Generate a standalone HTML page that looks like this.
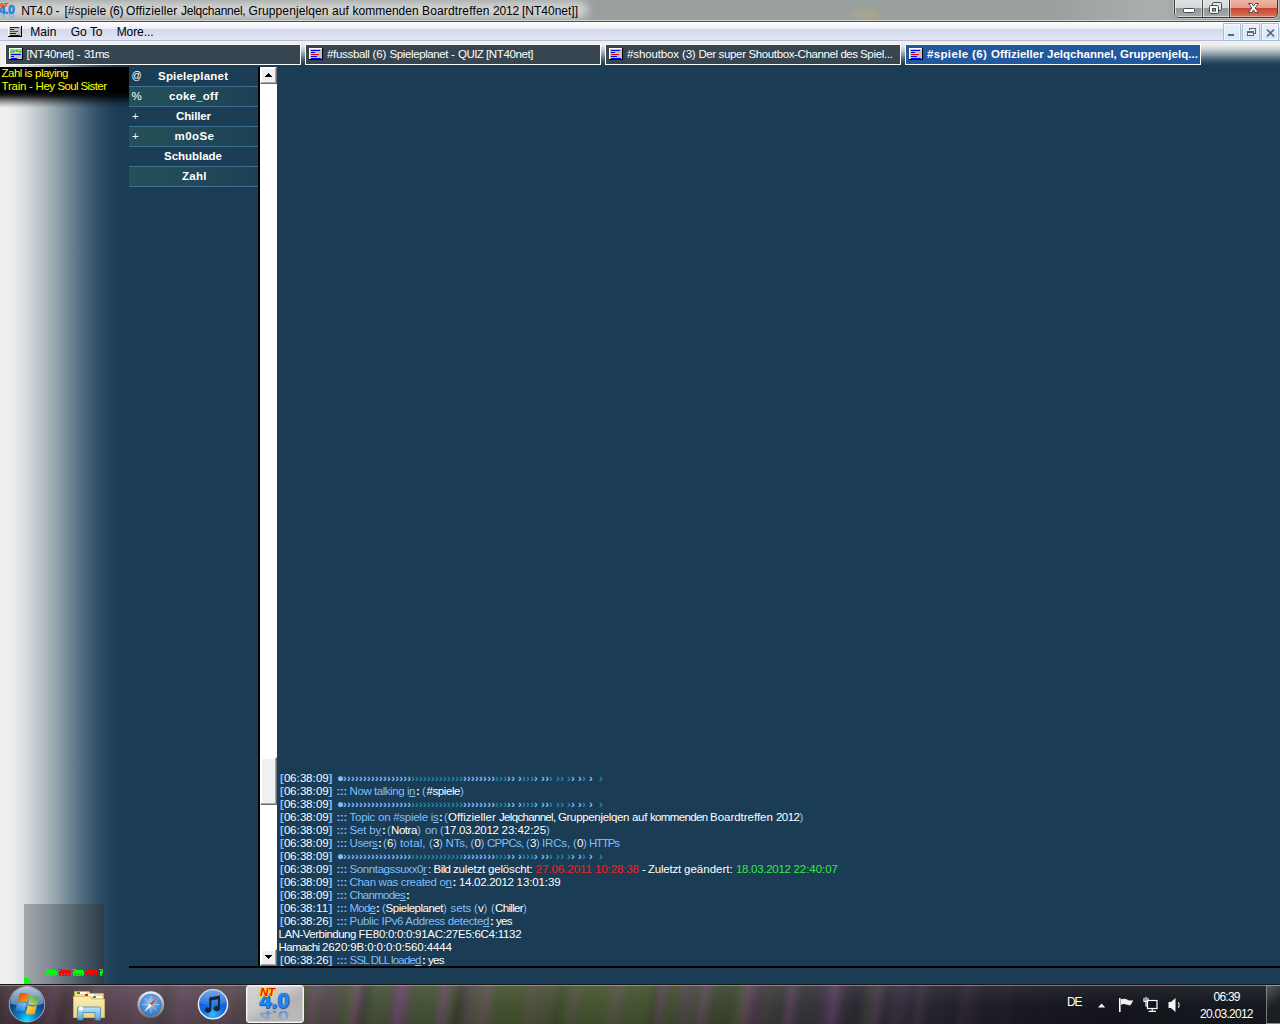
<!DOCTYPE html>
<html lang="de"><head><meta charset="utf-8"><title>NT4.0</title>
<style>
*{box-sizing:border-box;margin:0;padding:0}
html,body{width:1280px;height:1024px;overflow:hidden;background:#1a3c54}
body{position:relative;font-family:"Liberation Sans",sans-serif;font-size:11.5px;color:#fff}
.a{position:absolute}
.t{position:absolute;white-space:pre;line-height:normal;font-family:"Liberation Sans",sans-serif}
#title{left:0;top:0;width:1280px;height:22px;overflow:hidden;background:radial-gradient(ellipse 22px 9px at 866px 15px,rgba(190,176,120,.5),rgba(190,176,120,0)),linear-gradient(90deg,#989f9d 0,#989f9d 1040px,#a3aaa9 1120px,#aab0b0 1165px,#9aa09f 1180px,#989f9d 1280px)}
#title .hl{left:0;top:20px;width:1280px;height:1px;background:#d4d8d8}
#title .dk{left:0;top:21px;width:1280px;height:1px;background:#4a4e4e}
#glow{left:-14px;top:1px;width:602px;height:18px;background:linear-gradient(#cdcdcd,#d9d9d9 40%,#d6d6d6 70%,#c6c6c6);border-radius:9px;filter:blur(4px);opacity:.95}
#menu{left:0;top:22px;width:1280px;height:19px;background:linear-gradient(#fff 0,#f4f5fc 4px,#e8ebf7 7px,#d2d7ec 7px,#e2e6f6 18px,#b8bcd4 18px)}
#strip{left:0;top:41px;width:1280px;height:26px;background:linear-gradient(rgba(240,240,240,1) 0,rgba(240,240,240,1) 3.5px,rgba(240,240,240,.81) 8.5px,rgba(240,240,240,.52) 13.5px,rgba(240,240,240,.25) 17.5px,rgba(240,240,240,.075) 21.5px,rgba(240,240,240,0) 24.5px)}
.tab{top:44px;height:21px;border:1px solid #fff;background:#36454f}
.tab.act{background:#22589c}
.ico{position:absolute;left:3px;top:3px;width:14px;height:12px}
#left{left:0;top:41px;width:129px;height:943px;background:linear-gradient(90deg,#f0f0f0 0,#ebeded 12.5px,#d9dddf 25px,#c0c8cc 37.5px,#a3b0b8 50px,#8496a3 62.5px,#627a8b 75px,#456176 87.5px,#2e4d64 100px,#1e4058 112.5px,#1a3c54 119px)}
#np{left:0;top:67px;width:129px;height:46px;background:linear-gradient(#000 0,#000 25px,rgba(0,0,0,.85) 29px,rgba(0,0,0,.5) 33px,rgba(0,0,0,.2) 37px,rgba(0,0,0,0) 41px)}
#nick{left:129px;top:67px;width:129px}
.row{position:relative;height:20px;border-bottom:1px solid #3f6f93;background:#1b3e56}
.row.alt{background:linear-gradient(100deg,#245058 0,#224a57 50%,#1c4056 100%)}
#vline{left:258px;top:67px;width:2px;height:901px;background:#000}
#sb{left:260px;top:67px;width:17px;height:899px;background:#fff}
.btn3{position:absolute;left:0;width:17px;background:#f0f0f0;border:1px solid;border-color:#fff #6d6d6d #6d6d6d #fff;box-shadow:inset -1px -1px 0 #a6a6a6,inset 1px 1px 0 #fff}
#hline{left:129px;top:966px;width:1151px;height:2px;background:#000}
#graybox{left:24px;top:904px;width:80px;height:80px;background:linear-gradient(90deg,#a4a8ab 0,#8a9298 25%,#66747e 50%,#465662 75%,#2d3e4b 100%)}
#task{left:0;top:984px;width:1280px;height:40px;background:#2a2830;overflow:hidden}

svg{position:absolute;overflow:visible}
.px{shape-rendering:crispEdges}
#capbtn{left:1174px;top:0;width:104px;height:18px;border:1px solid #3a3c3c;border-top:none;border-radius:0 0 5px 5px;overflow:hidden;background:#888;box-shadow:0 0 0 1px rgba(255,255,255,.35)}
#capbtn div{position:absolute;top:0;height:17px}
.cb{background:linear-gradient(#dfe3e3 0,#d3d8d7 8px,#929997 8px,#a4aaa8 17px);box-shadow:inset 1px 0 0 rgba(255,255,255,.6),inset -1px 0 0 rgba(255,255,255,.4),inset 0 -1px 0 rgba(255,255,255,.5)}
.cbx{background:linear-gradient(#eeb5a6 0,#e29c8a 8px,#c6432a 8px,#d9745a 17px);box-shadow:inset 1px 0 0 rgba(255,255,255,.5),inset -1px 0 0 rgba(255,255,255,.4),inset 0 -1px 0 rgba(255,255,255,.4)}
.mdi{top:23px;width:18px;height:18px;border:1px solid #a9bfd8;background:linear-gradient(#e6f0fb,#d8e7f6);box-shadow:inset 0 0 0 1px rgba(255,255,255,.6)}
#tbtop1{left:0;top:0;width:1280px;height:1px;background:#16161a}
#tbtop2{left:0;top:1px;width:1280px;height:1px;background:rgba(200,200,210,.55)}
#tbbase{left:0;top:0;width:1280px;height:40px;background:linear-gradient(90deg,#3d3236 0,#4b3b40 60px,#5b4a54 130px,#594b52 200px,#54474d 246px,#48513a 304px,#46523a 400px,#45532f 520px,#46562f 620px,#3e4a30 700px,#3a3f36 760px,#34333a 820px,#2c2a33 900px,#1c1c25 1000px,#15161e 1100px,#161a20 1280px)}
#tbstreak{left:-40px;top:-4px;width:1160px;height:48px;background:
 repeating-linear-gradient(98deg,rgba(116,72,118,0) 0,rgba(116,72,118,.62) 8px,rgba(116,72,118,0) 19px,rgba(116,72,118,0) 43px),
 repeating-linear-gradient(96deg,rgba(100,62,104,0) 0,rgba(100,62,104,.5) 14px,rgba(100,62,104,0) 31px,rgba(100,62,104,0) 71px),
 repeating-linear-gradient(101deg,rgba(30,24,36,0) 0,rgba(30,24,36,.38) 10px,rgba(30,24,36,0) 22px,rgba(30,24,36,0) 97px),
 repeating-linear-gradient(100deg,rgba(104,124,48,0) 0,rgba(104,124,48,.3) 11px,rgba(104,124,48,0) 24px,rgba(104,124,48,0) 127px);
 -webkit-mask-image:linear-gradient(90deg,rgba(0,0,0,.4) 0,rgba(0,0,0,.5) 300px,#000 370px,#000 500px,rgba(0,0,0,.45) 560px,rgba(0,0,0,.45) 660px,rgba(0,0,0,.9) 720px,rgba(0,0,0,.7) 880px,rgba(0,0,0,.3) 980px,transparent 1080px);mask-image:linear-gradient(90deg,rgba(0,0,0,.4) 0,rgba(0,0,0,.5) 300px,#000 370px,#000 500px,rgba(0,0,0,.45) 560px,rgba(0,0,0,.45) 660px,rgba(0,0,0,.9) 720px,rgba(0,0,0,.7) 880px,rgba(0,0,0,.3) 980px,transparent 1080px);filter:blur(1.5px)}
#tbsheen{left:0;top:2px;width:1280px;height:38px;background:linear-gradient(rgba(255,255,255,.07),rgba(255,255,255,0) 50%,rgba(0,0,0,.12))}
#ntbtn{left:246px;top:1px;width:58px;height:38px;border:1px solid #f4f4f4;border-radius:3px;background:linear-gradient(150deg,#d4d4d4 0,#cac9c9 40%,#b4b2b2 58%,#bdbbbb 100%);box-shadow:inset 0 0 0 1px rgba(255,255,255,.35)}
#showdesk{left:1266px;top:1px;width:14px;height:39px;border:1px solid rgba(190,200,200,.55);border-right:none;background:linear-gradient(135deg,rgba(140,150,150,.45),rgba(40,50,50,.35) 50%,rgba(30,40,40,.3))}
</style></head><body>

<!-- ===== window title bar ===== -->
<div id="title" class="a">
  <div id="glow" class="a"></div>
  <div class="a hl"></div><div class="a dk"></div>
</div>

<div id="capbtn" class="a">
  <div class="cb" style="left:0;width:27px"></div>
  <div style="left:27px;width:1px;background:#4a4c4c"></div>
  <div class="cb" style="left:28px;width:26px"></div>
  <div style="left:54px;width:1px;background:#5a2a20"></div>
  <div class="cbx" style="left:55px;width:48px"></div>
</div>
<svg class="a" style="left:1174px;top:0" width="106" height="20" viewBox="1174 0 106 20">
  <rect x="1183.5" y="8.5" width="11" height="4" rx="1" fill="#fff" stroke="#454a5a" stroke-width="1"/>
  <rect x="1212.5" y="2.5" width="9" height="8" rx="1.2" fill="#e8e8e8" stroke="#454a5a" stroke-width="1"/>
  <rect x="1209.5" y="5.5" width="9" height="8" rx="1.2" fill="#f6f6f6" stroke="#454a5a" stroke-width="1"/>
  <rect x="1212.5" y="8.5" width="3" height="2.5" fill="#a9afad" stroke="#454a5a" stroke-width="1"/>
  <path d="M1248.5 3.5h3.2l1.8 2.6 1.8-2.6h3.2l-3.3 4.5 3.3 4.5h-3.2l-1.8-2.6-1.8 2.6h-3.2l3.3-4.5z" fill="#fff" stroke="#4a4a5a" stroke-width="1" stroke-linejoin="round"/>
</svg>
<div class="t" style="left:-1px;top:2.600px;font:bold 12px 'Liberation Sans',sans-serif;color:#1888f0;letter-spacing:-.4px;text-shadow:0 0 1px #0a50a8">4.0</div>
<div class="t" style="left:-1px;top:7.500px;font:bold 12px 'Liberation Sans',sans-serif;color:#3aa0f0;letter-spacing:-.4px;transform:scaleY(-.5);opacity:.45">4.0</div>
<div class="t" style="left:0;top:1.500px;font:italic bold 6px 'Liberation Sans',sans-serif;color:#f42a10;text-shadow:0 0 1px #ffb020">NT</div>
<span class="t" style="left:21.2px;top:4.14px;font-size:12px;font-weight:normal;letter-spacing:-0.286px;color:#000;">NT4.0 </span>
<span class="t" style="left:55.5px;top:4.14px;font-size:12px;font-weight:normal;letter-spacing:0.828px;color:#000;">- </span>
<span class="t" style="left:64.5px;top:4.14px;font-size:12px;font-weight:normal;letter-spacing:0.033px;color:#000;">[#spiele </span>
<span class="t" style="left:109.5px;top:4.14px;font-size:12px;font-weight:normal;letter-spacing:-0.375px;color:#000;">(6) </span>
<span class="t" style="left:126.0px;top:4.14px;font-size:12px;font-weight:normal;letter-spacing:0.155px;color:#000;">Offizieller </span>
<span class="t" style="left:181.0px;top:4.14px;font-size:12px;font-weight:normal;letter-spacing:-0.248px;color:#000;">Jelqchannel, </span>
<span class="t" style="left:248.5px;top:4.14px;font-size:12px;font-weight:normal;letter-spacing:0.103px;color:#000;">Gruppenjelqen </span>
<span class="t" style="left:332.0px;top:4.14px;font-size:12px;font-weight:normal;letter-spacing:0.121px;color:#000;">auf </span>
<span class="t" style="left:352.5px;top:4.14px;font-size:12px;font-weight:normal;letter-spacing:0.013px;color:#000;">kommenden </span>
<span class="t" style="left:422.0px;top:4.14px;font-size:12px;font-weight:normal;letter-spacing:0.141px;color:#000;">Boardtreffen </span>
<span class="t" style="left:493.0px;top:4.14px;font-size:12px;font-weight:normal;letter-spacing:-0.206px;color:#000;">2012 </span>
<span class="t" style="left:522.0px;top:4.14px;font-size:12px;font-weight:normal;letter-spacing:-0.003px;color:#000;">[NT40net]]</span>

<!-- ===== menu bar ===== -->
<div id="menu" class="a"></div>
<svg class="a px" style="left:8px;top:26px" width="14" height="11" viewBox="0 0 14 11">
<rect x="0" y="0" width="14" height="11" fill="#000"/><rect x="0" y="0" width="13" height="10" fill="#fff"/><rect x="1" y="1" width="12" height="9" fill="#c0c0c0"/>
<rect x="2" y="1" width="9" height="1" fill="#0000ff"/><rect x="2" y="3" width="4" height="1" fill="#0000ff"/><rect x="2" y="5" width="8" height="1" fill="#ff0000"/><rect x="2" y="7" width="6" height="1" fill="#0000ff"/><rect x="2" y="9" width="10" height="1" fill="#0000ff"/></svg>
<div class="a mdi" style="left:1223px"></div><div class="a mdi" style="left:1242px"></div><div class="a mdi" style="left:1261px"></div>
<svg class="a px" style="left:1223px;top:23px" width="57" height="18" viewBox="1223 23 57 18">
  <rect x="1228" y="34" width="6" height="2" fill="#5d6675"/>
  <path d="M1249.5 30v-1.5h6v5h-1.5" fill="none" stroke="#5d6675" stroke-width="1"/><rect x="1249" y="28" width="7" height="1" fill="#5d6675"/>
  <rect x="1247.5" y="31.500" width="6" height="4" fill="none" stroke="#5d6675" stroke-width="1"/><rect x="1247" y="31" width="7" height="2" fill="#5d6675"/>
</svg>
<svg class="a" style="left:1261px;top:23px" width="19" height="18" viewBox="1261 23 19 18">
  <path d="M1267 29.500l7 7M1274 29.500l-7 7" stroke="#5d6675" stroke-width="1.700" fill="none"/>
</svg>
<span class="t" style="left:30.2px;top:25.14px;font-size:12px;font-weight:normal;letter-spacing:0.095px;color:#000;">Main</span>
<span class="t" style="left:70.8px;top:25.14px;font-size:12px;font-weight:normal;letter-spacing:-0.048px;color:#000;">Go </span>
<span class="t" style="left:90.0px;top:25.14px;font-size:12px;font-weight:normal;letter-spacing:-0.188px;color:#000;">To</span>
<span class="t" style="left:116.7px;top:25.14px;font-size:12px;font-weight:normal;letter-spacing:-0.091px;color:#000;">More...</span>

<!-- ===== tab strip ===== -->
<div id="left" class="a"></div>
<div id="strip" class="a"></div>
<div class="a tab" style="left:5px;width:296px"></div>
<div class="a tab" style="left:305px;width:296px"></div>
<div class="a tab" style="left:605px;width:296px"></div>
<div class="a tab act" style="left:905px;width:296px"></div>
<svg class="a px" style="left:9px;top:48px" width="14" height="12" viewBox="0 0 14 12">
<rect width="14" height="12" fill="#000"/><rect width="13" height="11" fill="#fff"/><rect x="1" y="1" width="12" height="10" fill="#c0c0c0"/>
<path d="M1 3h2v-1h2v1h1v-1h1v-1h1v1h1v1h1v-1h1v1h2v1h-1v1h-1v-1h-2v1h-1v-1h-1v-1h-1v1h-1v1h-1v-1h-1v1h-2z" fill="#00ff00"/>
<rect x="6" y="4" width="3" height="1" fill="#ffff00"/>
<rect x="2" y="6" width="10" height="1" fill="#0000ff"/><rect x="2" y="8" width="3" height="1" fill="#0000ff"/><rect x="2" y="10" width="6" height="1" fill="#0000ff"/></svg><svg class="a px" style="left:309px;top:48px" width="14" height="12" viewBox="0 0 14 12">
<rect x="0" y="0" width="14" height="12" fill="#000"/><rect x="0" y="0" width="13" height="11" fill="#fff"/><rect x="1" y="1" width="12" height="10" fill="#c0c0c0"/>
<rect x="2" y="2" width="9" height="1" fill="#0000ff"/><rect x="2" y="4" width="4" height="1" fill="#0000ff"/><rect x="2" y="6" width="8" height="1" fill="#ff0000"/><rect x="2" y="8" width="6" height="1" fill="#0000ff"/><rect x="2" y="10" width="10" height="1" fill="#0000ff"/></svg><svg class="a px" style="left:609px;top:48px" width="14" height="12" viewBox="0 0 14 12">
<rect x="0" y="0" width="14" height="12" fill="#000"/><rect x="0" y="0" width="13" height="11" fill="#fff"/><rect x="1" y="1" width="12" height="10" fill="#c0c0c0"/>
<rect x="2" y="2" width="9" height="1" fill="#0000ff"/><rect x="2" y="4" width="4" height="1" fill="#0000ff"/><rect x="2" y="6" width="8" height="1" fill="#ff0000"/><rect x="2" y="8" width="6" height="1" fill="#0000ff"/><rect x="2" y="10" width="10" height="1" fill="#0000ff"/></svg><svg class="a px" style="left:909px;top:48px" width="14" height="12" viewBox="0 0 14 12">
<rect x="0" y="0" width="14" height="12" fill="#000"/><rect x="0" y="0" width="13" height="11" fill="#fff"/><rect x="1" y="1" width="12" height="10" fill="#c0c0c0"/>
<rect x="2" y="2" width="9" height="1" fill="#0000ff"/><rect x="2" y="4" width="4" height="1" fill="#0000ff"/><rect x="2" y="6" width="8" height="1" fill="#ff0000"/><rect x="2" y="8" width="6" height="1" fill="#0000ff"/><rect x="2" y="10" width="10" height="1" fill="#0000ff"/></svg>
<span class="t" style="left:26.5px;top:47.59px;font-size:11.5px;font-weight:normal;letter-spacing:-0.370px;color:#ffffff;">[NT40net] </span>
<span class="t" style="left:76.5px;top:47.59px;font-size:11.5px;font-weight:normal;letter-spacing:0.234px;color:#ffffff;">- </span>
<span class="t" style="left:84.0px;top:47.59px;font-size:11.5px;font-weight:normal;letter-spacing:-0.875px;color:#ffffff;">31ms</span>
<span class="t" style="left:327.0px;top:47.59px;font-size:11.5px;font-weight:normal;letter-spacing:-0.309px;color:#ffffff;">#fussball </span>
<span class="t" style="left:372.5px;top:47.59px;font-size:11.5px;font-weight:normal;letter-spacing:-0.062px;color:#ffffff;">(6) </span>
<span class="t" style="left:389.5px;top:47.59px;font-size:11.5px;font-weight:normal;letter-spacing:-0.385px;color:#ffffff;">Spieleplanet </span>
<span class="t" style="left:451.0px;top:47.59px;font-size:11.5px;font-weight:normal;letter-spacing:-0.016px;color:#ffffff;">- </span>
<span class="t" style="left:458.0px;top:47.59px;font-size:11.5px;font-weight:normal;letter-spacing:-0.534px;color:#ffffff;">QUIZ </span>
<span class="t" style="left:486.0px;top:47.59px;font-size:11.5px;font-weight:normal;letter-spacing:-0.375px;color:#ffffff;">[NT40net]</span>
<span class="t" style="left:627.0px;top:47.59px;font-size:11.5px;font-weight:normal;letter-spacing:-0.127px;color:#ffffff;">#shoutbox </span>
<span class="t" style="left:682.0px;top:47.59px;font-size:11.5px;font-weight:normal;letter-spacing:-0.188px;color:#ffffff;">(3) </span>
<span class="t" style="left:698.5px;top:47.59px;font-size:11.5px;font-weight:normal;letter-spacing:-0.434px;color:#ffffff;">Der </span>
<span class="t" style="left:718.5px;top:47.59px;font-size:11.5px;font-weight:normal;letter-spacing:-0.328px;color:#ffffff;">super </span>
<span class="t" style="left:748.5px;top:47.59px;font-size:11.5px;font-weight:normal;letter-spacing:-0.381px;color:#ffffff;">Shoutbox-Channel </span>
<span class="t" style="left:840.5px;top:47.59px;font-size:11.5px;font-weight:normal;letter-spacing:-0.562px;color:#ffffff;">des </span>
<span class="t" style="left:860.0px;top:47.59px;font-size:11.5px;font-weight:normal;letter-spacing:-0.310px;color:#ffffff;">Spiel...</span>
<span class="t" style="left:927.0px;top:47.59px;font-size:11.5px;font-weight:bold;letter-spacing:0.350px;color:#ffffff;">#spiele </span>
<span class="t" style="left:972.0px;top:47.59px;font-size:11.5px;font-weight:bold;letter-spacing:0.438px;color:#ffffff;">(6) </span>
<span class="t" style="left:991.0px;top:47.59px;font-size:11.5px;font-weight:bold;letter-spacing:0.033px;color:#ffffff;">Offizieller </span>
<span class="t" style="left:1047.0px;top:47.59px;font-size:11.5px;font-weight:bold;letter-spacing:0.011px;color:#ffffff;">Jelqchannel, </span>
<span class="t" style="left:1120.0px;top:47.59px;font-size:11.5px;font-weight:bold;letter-spacing:0.053px;color:#ffffff;">Gruppenjelq...</span>

<!-- ===== left gradient panel ===== -->
<div id="np" class="a"></div>
<div id="graybox" class="a"></div>
<svg class="a px" style="left:0;top:960px" width="129" height="24" viewBox="0 960 129 24"><rect x="45" y="969" width="4" height="1" fill="#00ff00"/><rect x="48" y="970" width="8" height="1" fill="#00ff00"/><rect x="46" y="971" width="11" height="2" fill="#00ff00"/><rect x="46" y="973" width="2" height="2" fill="#00ff00"/><rect x="49" y="973" width="2" height="2" fill="#00ff00"/><rect x="52" y="973" width="2" height="2" fill="#00ff00"/><rect x="55" y="973" width="2" height="2" fill="#00ff00"/><rect x="46" y="975" width="10" height="1" fill="#00ff00" opacity=".7"/><rect x="58" y="969" width="4" height="1" fill="#ff0000"/><rect x="61" y="970" width="9" height="1" fill="#ff0000"/><rect x="59" y="971" width="12" height="2" fill="#ff0000"/><rect x="59" y="973" width="2" height="2" fill="#ff0000"/><rect x="62" y="973" width="2" height="2" fill="#ff0000"/><rect x="65" y="973" width="2" height="2" fill="#ff0000"/><rect x="68" y="973" width="2" height="2" fill="#ff0000"/><rect x="59" y="975" width="11" height="1" fill="#ff0000" opacity=".7"/><rect x="72" y="969" width="4" height="1" fill="#00ff00"/><rect x="75" y="970" width="8" height="1" fill="#00ff00"/><rect x="73" y="971" width="11" height="2" fill="#00ff00"/><rect x="73" y="973" width="2" height="2" fill="#00ff00"/><rect x="76" y="973" width="2" height="2" fill="#00ff00"/><rect x="79" y="973" width="2" height="2" fill="#00ff00"/><rect x="82" y="973" width="2" height="2" fill="#00ff00"/><rect x="73" y="975" width="10" height="1" fill="#00ff00" opacity=".7"/><rect x="85" y="969" width="4" height="1" fill="#ff0000"/><rect x="88" y="970" width="9" height="1" fill="#ff0000"/><rect x="86" y="971" width="12" height="2" fill="#ff0000"/><rect x="86" y="973" width="2" height="2" fill="#ff0000"/><rect x="89" y="973" width="2" height="2" fill="#ff0000"/><rect x="92" y="973" width="2" height="2" fill="#ff0000"/><rect x="95" y="973" width="2" height="2" fill="#ff0000"/><rect x="86" y="975" width="11" height="1" fill="#ff0000" opacity=".7"/><rect x="99" y="969" width="4" height="1" fill="#00ff00"/><rect x="102" y="970" width="1" height="1" fill="#00ff00"/><rect x="100" y="971" width="3" height="2" fill="#00ff00"/><rect x="100" y="973" width="2" height="2" fill="#00ff00"/><rect x="100" y="975" width="2" height="1" fill="#00ff00" opacity=".7"/><rect x="24" y="978" width="6" height="1" fill="#00ff00"/><rect x="24" y="979" width="5" height="2" fill="#00ff00"/><rect x="25" y="981" width="2" height="3" fill="#00ff00"/><rect x="28" y="981" width="2" height="3" fill="#00ff00"/><rect x="31" y="980" width="1" height="4" fill="#00ff00"/><rect x="24" y="982" width="1" height="2" fill="#00ff00"/></svg>
<span class="t" style="left:1.5px;top:66.59px;font-size:11.5px;font-weight:normal;letter-spacing:-0.516px;color:#ffff00;">Zahl </span>
<span class="t" style="left:24.5px;top:66.59px;font-size:11.5px;font-weight:normal;letter-spacing:-0.333px;color:#ffff00;">is </span>
<span class="t" style="left:35.0px;top:66.59px;font-size:11.5px;font-weight:normal;letter-spacing:-0.492px;color:#ffff00;">playing</span>
<span class="t" style="left:1.6px;top:79.59px;font-size:11.5px;font-weight:normal;letter-spacing:-0.264px;color:#ffff00;">Train </span>
<span class="t" style="left:29.0px;top:79.59px;font-size:11.5px;font-weight:normal;letter-spacing:-0.266px;color:#ffff00;">- </span>
<span class="t" style="left:35.5px;top:79.59px;font-size:11.5px;font-weight:normal;letter-spacing:-0.414px;color:#ffff00;">Hey </span>
<span class="t" style="left:57.5px;top:79.59px;font-size:11.5px;font-weight:normal;letter-spacing:-0.644px;color:#ffff00;">Soul </span>
<span class="t" style="left:80.5px;top:79.59px;font-size:11.5px;font-weight:normal;letter-spacing:-0.581px;color:#ffff00;">Sister</span>

<!-- ===== nick list ===== -->
<div id="nick" class="a">
  <div class="row"></div><div class="row alt"></div><div class="row"></div><div class="row alt"></div><div class="row"></div><div class="row alt"></div>
</div>
<span class="t" style="left:131.5px;top:70.45px;font-size:10px;font-weight:normal;letter-spacing:0.000px;color:#ffffff;">@</span>
<span class="t" style="left:158.0px;top:69.59px;font-size:11.5px;font-weight:bold;letter-spacing:0.205px;color:#ffffff;">Spieleplanet</span>
<span class="t" style="left:131.5px;top:89.59px;font-size:11.5px;font-weight:normal;letter-spacing:0.000px;color:#ffffff;">%</span>
<span class="t" style="left:169.0px;top:89.59px;font-size:11.5px;font-weight:bold;letter-spacing:0.243px;color:#ffffff;">coke_off</span>
<span class="t" style="left:132.0px;top:109.59px;font-size:11.5px;font-weight:normal;letter-spacing:0.000px;color:#ffffff;">+</span>
<span class="t" style="left:176.0px;top:109.59px;font-size:11.5px;font-weight:bold;letter-spacing:-0.133px;color:#ffffff;">Chiller</span>
<span class="t" style="left:132.0px;top:129.59px;font-size:11.5px;font-weight:normal;letter-spacing:0.000px;color:#ffffff;">+</span>
<span class="t" style="left:174.5px;top:129.59px;font-size:11.5px;font-weight:bold;letter-spacing:0.445px;color:#ffffff;">m0oSe</span>
<span class="t" style="left:164.0px;top:149.59px;font-size:11.5px;font-weight:bold;letter-spacing:-0.020px;color:#ffffff;">Schublade</span>
<span class="t" style="left:182.0px;top:169.59px;font-size:11.5px;font-weight:bold;letter-spacing:0.286px;color:#ffffff;">Zahl</span>
<div id="vline" class="a"></div>
<div id="sb" class="a">
  <div class="btn3" style="top:0;height:17px"></div>
  <div class="btn3" style="top:690px;height:48px"></div>
  <div class="btn3" style="top:882px;height:17px"></div>
</div>
<svg class="a px" style="left:260px;top:67px" width="17" height="899" viewBox="0 0 17 899">
<path d="M8 6h1v1h1v1h1v1h1v1h-7v-1h1v-1h1v-1h1z" fill="#000"/>
<path d="M5 888h7v1h-1v1h-1v1h-1v1h-1v-1h-1v-1h-1v-1h-1z" fill="#000"/></svg>
<div id="hline" class="a"></div>

<!-- ===== chat ===== -->
<span class="t" style="left:280.0px;top:771.59px;font-size:11.5px;font-weight:normal;letter-spacing:0.000px;color:#7fbfff;font-weight:bold;">[</span>
<span class="t" style="left:284.0px;top:771.59px;font-size:11.5px;font-weight:normal;letter-spacing:-0.298px;color:#ffffff;">06</span>
<span class="t" style="left:296.2px;top:771.59px;font-size:11.5px;font-weight:normal;letter-spacing:0.000px;color:#7fbfff;font-weight:bold;">:</span>
<span class="t" style="left:300.0px;top:771.59px;font-size:11.5px;font-weight:normal;letter-spacing:-0.298px;color:#ffffff;">38</span>
<span class="t" style="left:312.2px;top:771.59px;font-size:11.5px;font-weight:normal;letter-spacing:0.000px;color:#7fbfff;font-weight:bold;">:</span>
<span class="t" style="left:316.0px;top:771.59px;font-size:11.5px;font-weight:normal;letter-spacing:-0.198px;color:#ffffff;">09</span>
<span class="t" style="left:328.4px;top:771.59px;font-size:11.5px;font-weight:normal;letter-spacing:0.000px;color:#7fbfff;font-weight:bold;">]</span>
<span class="t" style="left:337.0px;top:771.59px;font-size:11.5px;font-weight:normal;letter-spacing:0.000px;color:#7fbfff;">●</span>
<span class="t" style="left:343.0px;top:771.59px;font-size:11.5px;font-weight:normal;letter-spacing:0.181px;color:#7fbfff;font-weight:bold;">›››››››››››››››››</span>
<span class="t" style="left:411.0px;top:771.59px;font-size:11.5px;font-weight:normal;letter-spacing:0.184px;color:#1d8fb0;font-weight:bold;">›››››››››››››</span>
<span class="t" style="left:463.0px;top:771.59px;font-size:11.5px;font-weight:normal;letter-spacing:0.194px;color:#7fbfff;font-weight:bold;">››››››››</span>
<span class="t" style="left:495.0px;top:771.59px;font-size:11.5px;font-weight:normal;letter-spacing:0.250px;color:#1d8fb0;font-weight:bold;">›››</span>
<span class="t" style="left:507.0px;top:771.59px;font-size:11.5px;font-weight:normal;letter-spacing:0.328px;color:#7fbfff;font-weight:bold;">››</span>
<span class="t" style="left:518.0px;top:771.59px;font-size:11.5px;font-weight:normal;letter-spacing:0.000px;color:#7fbfff;font-weight:bold;">›</span>
<span class="t" style="left:522.0px;top:771.59px;font-size:11.5px;font-weight:normal;letter-spacing:0.250px;color:#1d8fb0;font-weight:bold;">›››</span>
<span class="t" style="left:534.0px;top:771.59px;font-size:11.5px;font-weight:normal;letter-spacing:0.000px;color:#7fbfff;font-weight:bold;">›</span>
<span class="t" style="left:541.0px;top:771.59px;font-size:11.5px;font-weight:normal;letter-spacing:0.328px;color:#7fbfff;font-weight:bold;">››</span>
<span class="t" style="left:549.0px;top:771.59px;font-size:11.5px;font-weight:normal;letter-spacing:0.000px;color:#1d8fb0;font-weight:bold;">›</span>
<span class="t" style="left:556.0px;top:771.59px;font-size:11.5px;font-weight:normal;letter-spacing:0.328px;color:#1d8fb0;font-weight:bold;">››</span>
<span class="t" style="left:567.0px;top:771.59px;font-size:11.5px;font-weight:normal;letter-spacing:0.000px;color:#1d8fb0;font-weight:bold;">›</span>
<span class="t" style="left:571.0px;top:771.59px;font-size:11.5px;font-weight:normal;letter-spacing:0.000px;color:#7fbfff;font-weight:bold;">›</span>
<span class="t" style="left:578.0px;top:771.59px;font-size:11.5px;font-weight:normal;letter-spacing:0.000px;color:#7fbfff;font-weight:bold;">›</span>
<span class="t" style="left:582.0px;top:771.59px;font-size:11.5px;font-weight:normal;letter-spacing:0.000px;color:#1d8fb0;font-weight:bold;">›</span>
<span class="t" style="left:589.0px;top:771.59px;font-size:11.5px;font-weight:normal;letter-spacing:0.000px;color:#7fbfff;font-weight:bold;">›</span>
<span class="t" style="left:599.0px;top:771.59px;font-size:11.5px;font-weight:normal;letter-spacing:0.000px;color:#1d8fb0;font-weight:bold;">›</span>
<span class="t" style="left:280.0px;top:784.59px;font-size:11.5px;font-weight:normal;letter-spacing:0.000px;color:#7fbfff;font-weight:bold;">[</span>
<span class="t" style="left:284.0px;top:784.59px;font-size:11.5px;font-weight:normal;letter-spacing:-0.298px;color:#ffffff;">06</span>
<span class="t" style="left:296.2px;top:784.59px;font-size:11.5px;font-weight:normal;letter-spacing:0.000px;color:#7fbfff;font-weight:bold;">:</span>
<span class="t" style="left:300.0px;top:784.59px;font-size:11.5px;font-weight:normal;letter-spacing:-0.298px;color:#ffffff;">38</span>
<span class="t" style="left:312.2px;top:784.59px;font-size:11.5px;font-weight:normal;letter-spacing:0.000px;color:#7fbfff;font-weight:bold;">:</span>
<span class="t" style="left:316.0px;top:784.59px;font-size:11.5px;font-weight:normal;letter-spacing:-0.198px;color:#ffffff;">09</span>
<span class="t" style="left:328.4px;top:784.59px;font-size:11.5px;font-weight:normal;letter-spacing:0.000px;color:#7fbfff;font-weight:bold;">]</span>
<span class="t" style="left:336.6px;top:784.59px;font-size:11.5px;font-weight:normal;letter-spacing:-0.422px;color:#7fbfff;font-weight:bold;">::: </span>
<span class="t" style="left:349.6px;top:784.59px;font-size:11.5px;font-weight:normal;letter-spacing:-0.446px;color:#7fbfff;">Now talking i</span>
<span class="t" style="left:409.0px;top:784.59px;font-size:11.5px;font-weight:normal;letter-spacing:0.000px;color:#7fbfff;text-decoration:underline;">n</span>
<span class="t" style="left:416.0px;top:784.59px;font-size:11.5px;font-weight:normal;letter-spacing:0.000px;color:#ffffff;font-weight:bold;">:</span>
<span class="t" style="left:422.0px;top:784.59px;font-size:11.5px;font-weight:normal;letter-spacing:0.000px;color:#7fbfff;">(</span>
<span class="t" style="left:426.5px;top:784.59px;font-size:11.5px;font-weight:normal;letter-spacing:-0.422px;color:#ffffff;">#spiele</span>
<span class="t" style="left:460.0px;top:784.59px;font-size:11.5px;font-weight:normal;letter-spacing:0.000px;color:#7fbfff;">)</span>
<span class="t" style="left:280.0px;top:797.59px;font-size:11.5px;font-weight:normal;letter-spacing:0.000px;color:#7fbfff;font-weight:bold;">[</span>
<span class="t" style="left:284.0px;top:797.59px;font-size:11.5px;font-weight:normal;letter-spacing:-0.298px;color:#ffffff;">06</span>
<span class="t" style="left:296.2px;top:797.59px;font-size:11.5px;font-weight:normal;letter-spacing:0.000px;color:#7fbfff;font-weight:bold;">:</span>
<span class="t" style="left:300.0px;top:797.59px;font-size:11.5px;font-weight:normal;letter-spacing:-0.298px;color:#ffffff;">38</span>
<span class="t" style="left:312.2px;top:797.59px;font-size:11.5px;font-weight:normal;letter-spacing:0.000px;color:#7fbfff;font-weight:bold;">:</span>
<span class="t" style="left:316.0px;top:797.59px;font-size:11.5px;font-weight:normal;letter-spacing:-0.198px;color:#ffffff;">09</span>
<span class="t" style="left:328.4px;top:797.59px;font-size:11.5px;font-weight:normal;letter-spacing:0.000px;color:#7fbfff;font-weight:bold;">]</span>
<span class="t" style="left:337.0px;top:797.59px;font-size:11.5px;font-weight:normal;letter-spacing:0.000px;color:#7fbfff;">●</span>
<span class="t" style="left:343.0px;top:797.59px;font-size:11.5px;font-weight:normal;letter-spacing:0.181px;color:#7fbfff;font-weight:bold;">›››››››››››››››››</span>
<span class="t" style="left:411.0px;top:797.59px;font-size:11.5px;font-weight:normal;letter-spacing:0.184px;color:#1d8fb0;font-weight:bold;">›››››››››››››</span>
<span class="t" style="left:463.0px;top:797.59px;font-size:11.5px;font-weight:normal;letter-spacing:0.194px;color:#7fbfff;font-weight:bold;">››››››››</span>
<span class="t" style="left:495.0px;top:797.59px;font-size:11.5px;font-weight:normal;letter-spacing:0.250px;color:#1d8fb0;font-weight:bold;">›››</span>
<span class="t" style="left:507.0px;top:797.59px;font-size:11.5px;font-weight:normal;letter-spacing:0.328px;color:#7fbfff;font-weight:bold;">››</span>
<span class="t" style="left:518.0px;top:797.59px;font-size:11.5px;font-weight:normal;letter-spacing:0.000px;color:#7fbfff;font-weight:bold;">›</span>
<span class="t" style="left:522.0px;top:797.59px;font-size:11.5px;font-weight:normal;letter-spacing:0.250px;color:#1d8fb0;font-weight:bold;">›››</span>
<span class="t" style="left:534.0px;top:797.59px;font-size:11.5px;font-weight:normal;letter-spacing:0.000px;color:#7fbfff;font-weight:bold;">›</span>
<span class="t" style="left:541.0px;top:797.59px;font-size:11.5px;font-weight:normal;letter-spacing:0.328px;color:#7fbfff;font-weight:bold;">››</span>
<span class="t" style="left:549.0px;top:797.59px;font-size:11.5px;font-weight:normal;letter-spacing:0.000px;color:#1d8fb0;font-weight:bold;">›</span>
<span class="t" style="left:556.0px;top:797.59px;font-size:11.5px;font-weight:normal;letter-spacing:0.328px;color:#1d8fb0;font-weight:bold;">››</span>
<span class="t" style="left:567.0px;top:797.59px;font-size:11.5px;font-weight:normal;letter-spacing:0.000px;color:#1d8fb0;font-weight:bold;">›</span>
<span class="t" style="left:571.0px;top:797.59px;font-size:11.5px;font-weight:normal;letter-spacing:0.000px;color:#7fbfff;font-weight:bold;">›</span>
<span class="t" style="left:578.0px;top:797.59px;font-size:11.5px;font-weight:normal;letter-spacing:0.000px;color:#7fbfff;font-weight:bold;">›</span>
<span class="t" style="left:582.0px;top:797.59px;font-size:11.5px;font-weight:normal;letter-spacing:0.000px;color:#1d8fb0;font-weight:bold;">›</span>
<span class="t" style="left:589.0px;top:797.59px;font-size:11.5px;font-weight:normal;letter-spacing:0.000px;color:#7fbfff;font-weight:bold;">›</span>
<span class="t" style="left:599.0px;top:797.59px;font-size:11.5px;font-weight:normal;letter-spacing:0.000px;color:#1d8fb0;font-weight:bold;">›</span>
<span class="t" style="left:280.0px;top:810.59px;font-size:11.5px;font-weight:normal;letter-spacing:0.000px;color:#7fbfff;font-weight:bold;">[</span>
<span class="t" style="left:284.0px;top:810.59px;font-size:11.5px;font-weight:normal;letter-spacing:-0.298px;color:#ffffff;">06</span>
<span class="t" style="left:296.2px;top:810.59px;font-size:11.5px;font-weight:normal;letter-spacing:0.000px;color:#7fbfff;font-weight:bold;">:</span>
<span class="t" style="left:300.0px;top:810.59px;font-size:11.5px;font-weight:normal;letter-spacing:-0.298px;color:#ffffff;">38</span>
<span class="t" style="left:312.2px;top:810.59px;font-size:11.5px;font-weight:normal;letter-spacing:0.000px;color:#7fbfff;font-weight:bold;">:</span>
<span class="t" style="left:316.0px;top:810.59px;font-size:11.5px;font-weight:normal;letter-spacing:-0.198px;color:#ffffff;">09</span>
<span class="t" style="left:328.4px;top:810.59px;font-size:11.5px;font-weight:normal;letter-spacing:0.000px;color:#7fbfff;font-weight:bold;">]</span>
<span class="t" style="left:336.6px;top:810.59px;font-size:11.5px;font-weight:normal;letter-spacing:-0.422px;color:#7fbfff;font-weight:bold;">::: </span>
<span class="t" style="left:349.6px;top:810.59px;font-size:11.5px;font-weight:normal;letter-spacing:-0.269px;color:#7fbfff;">Topic on #spiele i</span>
<span class="t" style="left:433.0px;top:810.59px;font-size:11.5px;font-weight:normal;letter-spacing:0.000px;color:#7fbfff;text-decoration:underline;">s</span>
<span class="t" style="left:439.0px;top:810.59px;font-size:11.5px;font-weight:normal;letter-spacing:0.000px;color:#ffffff;font-weight:bold;">:</span>
<span class="t" style="left:444.0px;top:810.59px;font-size:11.5px;font-weight:normal;letter-spacing:0.000px;color:#7fbfff;">(</span>
<span class="t" style="left:448.0px;top:810.59px;font-size:11.5px;font-weight:normal;letter-spacing:0.007px;color:#ffffff;">Offizieller </span>
<span class="t" style="left:499.0px;top:810.59px;font-size:11.5px;font-weight:normal;letter-spacing:-0.675px;color:#ffffff;">Jelqchannel, </span>
<span class="t" style="left:558.0px;top:810.59px;font-size:11.5px;font-weight:normal;letter-spacing:-0.333px;color:#ffffff;">Gruppenjelqen </span>
<span class="t" style="left:632.0px;top:810.59px;font-size:11.5px;font-weight:normal;letter-spacing:-0.297px;color:#ffffff;">auf </span>
<span class="t" style="left:650.0px;top:810.59px;font-size:11.5px;font-weight:normal;letter-spacing:-0.648px;color:#ffffff;">kommenden </span>
<span class="t" style="left:710.0px;top:810.59px;font-size:11.5px;font-weight:normal;letter-spacing:-0.022px;color:#ffffff;">Boardtreffen </span>
<span class="t" style="left:776.0px;top:810.59px;font-size:11.5px;font-weight:normal;letter-spacing:-0.523px;color:#ffffff;">2012</span>
<span class="t" style="left:799.5px;top:810.59px;font-size:11.5px;font-weight:normal;letter-spacing:0.000px;color:#7fbfff;">)</span>
<span class="t" style="left:280.0px;top:823.59px;font-size:11.5px;font-weight:normal;letter-spacing:0.000px;color:#7fbfff;font-weight:bold;">[</span>
<span class="t" style="left:284.0px;top:823.59px;font-size:11.5px;font-weight:normal;letter-spacing:-0.298px;color:#ffffff;">06</span>
<span class="t" style="left:296.2px;top:823.59px;font-size:11.5px;font-weight:normal;letter-spacing:0.000px;color:#7fbfff;font-weight:bold;">:</span>
<span class="t" style="left:300.0px;top:823.59px;font-size:11.5px;font-weight:normal;letter-spacing:-0.298px;color:#ffffff;">38</span>
<span class="t" style="left:312.2px;top:823.59px;font-size:11.5px;font-weight:normal;letter-spacing:0.000px;color:#7fbfff;font-weight:bold;">:</span>
<span class="t" style="left:316.0px;top:823.59px;font-size:11.5px;font-weight:normal;letter-spacing:-0.198px;color:#ffffff;">09</span>
<span class="t" style="left:328.4px;top:823.59px;font-size:11.5px;font-weight:normal;letter-spacing:0.000px;color:#7fbfff;font-weight:bold;">]</span>
<span class="t" style="left:336.6px;top:823.59px;font-size:11.5px;font-weight:normal;letter-spacing:-0.422px;color:#7fbfff;font-weight:bold;">::: </span>
<span class="t" style="left:349.6px;top:823.59px;font-size:11.5px;font-weight:normal;letter-spacing:-0.192px;color:#7fbfff;">Set b</span>
<span class="t" style="left:375.5px;top:823.59px;font-size:11.5px;font-weight:normal;letter-spacing:0.000px;color:#7fbfff;text-decoration:underline;">y</span>
<span class="t" style="left:382.0px;top:823.59px;font-size:11.5px;font-weight:normal;letter-spacing:0.000px;color:#ffffff;font-weight:bold;">:</span>
<span class="t" style="left:387.0px;top:823.59px;font-size:11.5px;font-weight:normal;letter-spacing:0.000px;color:#7fbfff;">(</span>
<span class="t" style="left:391.0px;top:823.59px;font-size:11.5px;font-weight:normal;letter-spacing:-0.425px;color:#ffffff;">Notra</span>
<span class="t" style="left:417.0px;top:823.59px;font-size:11.5px;font-weight:normal;letter-spacing:0.000px;color:#7fbfff;">)</span>
<span class="t" style="left:425.0px;top:823.59px;font-size:11.5px;font-weight:normal;letter-spacing:-0.333px;color:#7fbfff;">on </span>
<span class="t" style="left:440.0px;top:823.59px;font-size:11.5px;font-weight:normal;letter-spacing:0.000px;color:#7fbfff;">(</span>
<span class="t" style="left:444.0px;top:823.59px;font-size:11.5px;font-weight:normal;letter-spacing:-0.288px;color:#ffffff;">17.03.2012 </span>
<span class="t" style="left:501.6px;top:823.59px;font-size:11.5px;font-weight:normal;letter-spacing:-0.046px;color:#ffffff;">23:42:25</span>
<span class="t" style="left:546.0px;top:823.59px;font-size:11.5px;font-weight:normal;letter-spacing:0.000px;color:#7fbfff;">)</span>
<span class="t" style="left:280.0px;top:836.59px;font-size:11.5px;font-weight:normal;letter-spacing:0.000px;color:#7fbfff;font-weight:bold;">[</span>
<span class="t" style="left:284.0px;top:836.59px;font-size:11.5px;font-weight:normal;letter-spacing:-0.298px;color:#ffffff;">06</span>
<span class="t" style="left:296.2px;top:836.59px;font-size:11.5px;font-weight:normal;letter-spacing:0.000px;color:#7fbfff;font-weight:bold;">:</span>
<span class="t" style="left:300.0px;top:836.59px;font-size:11.5px;font-weight:normal;letter-spacing:-0.298px;color:#ffffff;">38</span>
<span class="t" style="left:312.2px;top:836.59px;font-size:11.5px;font-weight:normal;letter-spacing:0.000px;color:#7fbfff;font-weight:bold;">:</span>
<span class="t" style="left:316.0px;top:836.59px;font-size:11.5px;font-weight:normal;letter-spacing:-0.198px;color:#ffffff;">09</span>
<span class="t" style="left:328.4px;top:836.59px;font-size:11.5px;font-weight:normal;letter-spacing:0.000px;color:#7fbfff;font-weight:bold;">]</span>
<span class="t" style="left:336.6px;top:836.59px;font-size:11.5px;font-weight:normal;letter-spacing:-0.422px;color:#7fbfff;font-weight:bold;">::: </span>
<span class="t" style="left:349.6px;top:836.59px;font-size:11.5px;font-weight:normal;letter-spacing:-0.470px;color:#7fbfff;">User</span>
<span class="t" style="left:372.0px;top:836.59px;font-size:11.5px;font-weight:normal;letter-spacing:0.000px;color:#7fbfff;text-decoration:underline;">s</span>
<span class="t" style="left:378.0px;top:836.59px;font-size:11.5px;font-weight:normal;letter-spacing:0.000px;color:#ffffff;font-weight:bold;">:</span>
<span class="t" style="left:383.0px;top:836.59px;font-size:11.5px;font-weight:normal;letter-spacing:0.000px;color:#7fbfff;">(</span>
<span class="t" style="left:387.0px;top:836.59px;font-size:11.5px;font-weight:normal;letter-spacing:0.000px;color:#ffffff;">6</span>
<span class="t" style="left:393.0px;top:836.59px;font-size:11.5px;font-weight:normal;letter-spacing:0.000px;color:#7fbfff;">)</span>
<span class="t" style="left:400.0px;top:836.59px;font-size:11.5px;font-weight:normal;letter-spacing:0.123px;color:#7fbfff;">total, </span>
<span class="t" style="left:429.0px;top:836.59px;font-size:11.5px;font-weight:normal;letter-spacing:0.000px;color:#7fbfff;">(</span>
<span class="t" style="left:433.0px;top:836.59px;font-size:11.5px;font-weight:normal;letter-spacing:0.000px;color:#ffffff;">3</span>
<span class="t" style="left:439.0px;top:836.59px;font-size:11.5px;font-weight:normal;letter-spacing:0.000px;color:#7fbfff;">)</span>
<span class="t" style="left:445.6px;top:836.59px;font-size:11.5px;font-weight:normal;letter-spacing:-0.241px;color:#7fbfff;">NTs, </span>
<span class="t" style="left:470.6px;top:836.59px;font-size:11.5px;font-weight:normal;letter-spacing:0.000px;color:#7fbfff;">(</span>
<span class="t" style="left:474.6px;top:836.59px;font-size:11.5px;font-weight:normal;letter-spacing:0.000px;color:#ffffff;">0</span>
<span class="t" style="left:480.6px;top:836.59px;font-size:11.5px;font-weight:normal;letter-spacing:0.000px;color:#7fbfff;">)</span>
<span class="t" style="left:487.0px;top:836.59px;font-size:11.5px;font-weight:normal;letter-spacing:-0.728px;color:#7fbfff;">CPPCs, </span>
<span class="t" style="left:526.0px;top:836.59px;font-size:11.5px;font-weight:normal;letter-spacing:0.000px;color:#7fbfff;">(</span>
<span class="t" style="left:530.0px;top:836.59px;font-size:11.5px;font-weight:normal;letter-spacing:0.000px;color:#ffffff;">3</span>
<span class="t" style="left:536.0px;top:836.59px;font-size:11.5px;font-weight:normal;letter-spacing:0.000px;color:#7fbfff;">)</span>
<span class="t" style="left:542.0px;top:836.59px;font-size:11.5px;font-weight:normal;letter-spacing:-0.159px;color:#7fbfff;">IRCs, </span>
<span class="t" style="left:573.0px;top:836.59px;font-size:11.5px;font-weight:normal;letter-spacing:0.000px;color:#7fbfff;">(</span>
<span class="t" style="left:577.0px;top:836.59px;font-size:11.5px;font-weight:normal;letter-spacing:0.000px;color:#ffffff;">0</span>
<span class="t" style="left:583.0px;top:836.59px;font-size:11.5px;font-weight:normal;letter-spacing:0.000px;color:#7fbfff;">)</span>
<span class="t" style="left:589.0px;top:836.59px;font-size:11.5px;font-weight:normal;letter-spacing:-1.200px;color:#7fbfff;">HTTPs</span>
<span class="t" style="left:280.0px;top:849.59px;font-size:11.5px;font-weight:normal;letter-spacing:0.000px;color:#7fbfff;font-weight:bold;">[</span>
<span class="t" style="left:284.0px;top:849.59px;font-size:11.5px;font-weight:normal;letter-spacing:-0.298px;color:#ffffff;">06</span>
<span class="t" style="left:296.2px;top:849.59px;font-size:11.5px;font-weight:normal;letter-spacing:0.000px;color:#7fbfff;font-weight:bold;">:</span>
<span class="t" style="left:300.0px;top:849.59px;font-size:11.5px;font-weight:normal;letter-spacing:-0.298px;color:#ffffff;">38</span>
<span class="t" style="left:312.2px;top:849.59px;font-size:11.5px;font-weight:normal;letter-spacing:0.000px;color:#7fbfff;font-weight:bold;">:</span>
<span class="t" style="left:316.0px;top:849.59px;font-size:11.5px;font-weight:normal;letter-spacing:-0.198px;color:#ffffff;">09</span>
<span class="t" style="left:328.4px;top:849.59px;font-size:11.5px;font-weight:normal;letter-spacing:0.000px;color:#7fbfff;font-weight:bold;">]</span>
<span class="t" style="left:337.0px;top:849.59px;font-size:11.5px;font-weight:normal;letter-spacing:0.000px;color:#7fbfff;">●</span>
<span class="t" style="left:343.0px;top:849.59px;font-size:11.5px;font-weight:normal;letter-spacing:0.181px;color:#7fbfff;font-weight:bold;">›››››››››››››››››</span>
<span class="t" style="left:411.0px;top:849.59px;font-size:11.5px;font-weight:normal;letter-spacing:0.184px;color:#1d8fb0;font-weight:bold;">›››››››››››››</span>
<span class="t" style="left:463.0px;top:849.59px;font-size:11.5px;font-weight:normal;letter-spacing:0.194px;color:#7fbfff;font-weight:bold;">››››››››</span>
<span class="t" style="left:495.0px;top:849.59px;font-size:11.5px;font-weight:normal;letter-spacing:0.250px;color:#1d8fb0;font-weight:bold;">›››</span>
<span class="t" style="left:507.0px;top:849.59px;font-size:11.5px;font-weight:normal;letter-spacing:0.328px;color:#7fbfff;font-weight:bold;">››</span>
<span class="t" style="left:518.0px;top:849.59px;font-size:11.5px;font-weight:normal;letter-spacing:0.000px;color:#7fbfff;font-weight:bold;">›</span>
<span class="t" style="left:522.0px;top:849.59px;font-size:11.5px;font-weight:normal;letter-spacing:0.250px;color:#1d8fb0;font-weight:bold;">›››</span>
<span class="t" style="left:534.0px;top:849.59px;font-size:11.5px;font-weight:normal;letter-spacing:0.000px;color:#7fbfff;font-weight:bold;">›</span>
<span class="t" style="left:541.0px;top:849.59px;font-size:11.5px;font-weight:normal;letter-spacing:0.328px;color:#7fbfff;font-weight:bold;">››</span>
<span class="t" style="left:549.0px;top:849.59px;font-size:11.5px;font-weight:normal;letter-spacing:0.000px;color:#1d8fb0;font-weight:bold;">›</span>
<span class="t" style="left:556.0px;top:849.59px;font-size:11.5px;font-weight:normal;letter-spacing:0.328px;color:#1d8fb0;font-weight:bold;">››</span>
<span class="t" style="left:567.0px;top:849.59px;font-size:11.5px;font-weight:normal;letter-spacing:0.000px;color:#1d8fb0;font-weight:bold;">›</span>
<span class="t" style="left:571.0px;top:849.59px;font-size:11.5px;font-weight:normal;letter-spacing:0.000px;color:#7fbfff;font-weight:bold;">›</span>
<span class="t" style="left:578.0px;top:849.59px;font-size:11.5px;font-weight:normal;letter-spacing:0.000px;color:#7fbfff;font-weight:bold;">›</span>
<span class="t" style="left:582.0px;top:849.59px;font-size:11.5px;font-weight:normal;letter-spacing:0.000px;color:#1d8fb0;font-weight:bold;">›</span>
<span class="t" style="left:589.0px;top:849.59px;font-size:11.5px;font-weight:normal;letter-spacing:0.000px;color:#7fbfff;font-weight:bold;">›</span>
<span class="t" style="left:599.0px;top:849.59px;font-size:11.5px;font-weight:normal;letter-spacing:0.000px;color:#1d8fb0;font-weight:bold;">›</span>
<span class="t" style="left:280.0px;top:862.59px;font-size:11.5px;font-weight:normal;letter-spacing:0.000px;color:#7fbfff;font-weight:bold;">[</span>
<span class="t" style="left:284.0px;top:862.59px;font-size:11.5px;font-weight:normal;letter-spacing:-0.298px;color:#ffffff;">06</span>
<span class="t" style="left:296.2px;top:862.59px;font-size:11.5px;font-weight:normal;letter-spacing:0.000px;color:#7fbfff;font-weight:bold;">:</span>
<span class="t" style="left:300.0px;top:862.59px;font-size:11.5px;font-weight:normal;letter-spacing:-0.298px;color:#ffffff;">38</span>
<span class="t" style="left:312.2px;top:862.59px;font-size:11.5px;font-weight:normal;letter-spacing:0.000px;color:#7fbfff;font-weight:bold;">:</span>
<span class="t" style="left:316.0px;top:862.59px;font-size:11.5px;font-weight:normal;letter-spacing:-0.198px;color:#ffffff;">09</span>
<span class="t" style="left:328.4px;top:862.59px;font-size:11.5px;font-weight:normal;letter-spacing:0.000px;color:#7fbfff;font-weight:bold;">]</span>
<span class="t" style="left:336.6px;top:862.59px;font-size:11.5px;font-weight:normal;letter-spacing:-0.422px;color:#7fbfff;font-weight:bold;">::: </span>
<span class="t" style="left:349.6px;top:862.59px;font-size:11.5px;font-weight:normal;letter-spacing:-0.403px;color:#7fbfff;">Sonntagssuxx0</span>
<span class="t" style="left:423.0px;top:862.59px;font-size:11.5px;font-weight:normal;letter-spacing:0.000px;color:#7fbfff;text-decoration:underline;">r</span>
<span class="t" style="left:428.0px;top:862.59px;font-size:11.5px;font-weight:normal;letter-spacing:0.000px;color:#ffffff;">:</span>
<span class="t" style="left:433.6px;top:862.59px;font-size:11.5px;font-weight:normal;letter-spacing:-0.595px;color:#ffffff;">Bild </span>
<span class="t" style="left:453.0px;top:862.59px;font-size:11.5px;font-weight:normal;letter-spacing:-0.180px;color:#ffffff;">zuletzt </span>
<span class="t" style="left:488.0px;top:862.59px;font-size:11.5px;font-weight:normal;letter-spacing:-0.163px;color:#ffffff;">gelöscht: </span>
<span class="t" style="left:535.6px;top:862.59px;font-size:11.5px;font-weight:normal;letter-spacing:-0.046px;color:#fa1c1c;">27.06.2011 </span>
<span class="t" style="left:595.0px;top:862.59px;font-size:11.5px;font-weight:normal;letter-spacing:-0.108px;color:#fa1c1c;">10:28:38 </span>
<span class="t" style="left:642.0px;top:862.59px;font-size:11.5px;font-weight:normal;letter-spacing:-0.516px;color:#ffffff;">- </span>
<span class="t" style="left:648.0px;top:862.59px;font-size:11.5px;font-weight:normal;letter-spacing:-0.215px;color:#ffffff;">Zuletzt </span>
<span class="t" style="left:684.0px;top:862.59px;font-size:11.5px;font-weight:normal;letter-spacing:0.020px;color:#ffffff;">geändert: </span>
<span class="t" style="left:736.0px;top:862.59px;font-size:11.5px;font-weight:normal;letter-spacing:-0.297px;color:#34ea44;">18.03.2012 </span>
<span class="t" style="left:793.5px;top:862.59px;font-size:11.5px;font-weight:normal;letter-spacing:-0.038px;color:#34ea44;">22:40:07</span>
<span class="t" style="left:280.0px;top:875.59px;font-size:11.5px;font-weight:normal;letter-spacing:0.000px;color:#7fbfff;font-weight:bold;">[</span>
<span class="t" style="left:284.0px;top:875.59px;font-size:11.5px;font-weight:normal;letter-spacing:-0.298px;color:#ffffff;">06</span>
<span class="t" style="left:296.2px;top:875.59px;font-size:11.5px;font-weight:normal;letter-spacing:0.000px;color:#7fbfff;font-weight:bold;">:</span>
<span class="t" style="left:300.0px;top:875.59px;font-size:11.5px;font-weight:normal;letter-spacing:-0.298px;color:#ffffff;">38</span>
<span class="t" style="left:312.2px;top:875.59px;font-size:11.5px;font-weight:normal;letter-spacing:0.000px;color:#7fbfff;font-weight:bold;">:</span>
<span class="t" style="left:316.0px;top:875.59px;font-size:11.5px;font-weight:normal;letter-spacing:-0.198px;color:#ffffff;">09</span>
<span class="t" style="left:328.4px;top:875.59px;font-size:11.5px;font-weight:normal;letter-spacing:0.000px;color:#7fbfff;font-weight:bold;">]</span>
<span class="t" style="left:336.6px;top:875.59px;font-size:11.5px;font-weight:normal;letter-spacing:-0.422px;color:#7fbfff;font-weight:bold;">::: </span>
<span class="t" style="left:349.6px;top:875.59px;font-size:11.5px;font-weight:normal;letter-spacing:-0.355px;color:#7fbfff;">Chan was created o</span>
<span class="t" style="left:445.5px;top:875.59px;font-size:11.5px;font-weight:normal;letter-spacing:0.000px;color:#7fbfff;text-decoration:underline;">n</span>
<span class="t" style="left:452.6px;top:875.59px;font-size:11.5px;font-weight:normal;letter-spacing:0.000px;color:#ffffff;font-weight:bold;">:</span>
<span class="t" style="left:459.0px;top:875.59px;font-size:11.5px;font-weight:normal;letter-spacing:-0.288px;color:#ffffff;">14.02.2012 </span>
<span class="t" style="left:516.6px;top:875.59px;font-size:11.5px;font-weight:normal;letter-spacing:-0.109px;color:#ffffff;">13:01:39</span>
<span class="t" style="left:280.0px;top:888.59px;font-size:11.5px;font-weight:normal;letter-spacing:0.000px;color:#7fbfff;font-weight:bold;">[</span>
<span class="t" style="left:284.0px;top:888.59px;font-size:11.5px;font-weight:normal;letter-spacing:-0.298px;color:#ffffff;">06</span>
<span class="t" style="left:296.2px;top:888.59px;font-size:11.5px;font-weight:normal;letter-spacing:0.000px;color:#7fbfff;font-weight:bold;">:</span>
<span class="t" style="left:300.0px;top:888.59px;font-size:11.5px;font-weight:normal;letter-spacing:-0.298px;color:#ffffff;">38</span>
<span class="t" style="left:312.2px;top:888.59px;font-size:11.5px;font-weight:normal;letter-spacing:0.000px;color:#7fbfff;font-weight:bold;">:</span>
<span class="t" style="left:316.0px;top:888.59px;font-size:11.5px;font-weight:normal;letter-spacing:-0.198px;color:#ffffff;">09</span>
<span class="t" style="left:328.4px;top:888.59px;font-size:11.5px;font-weight:normal;letter-spacing:0.000px;color:#7fbfff;font-weight:bold;">]</span>
<span class="t" style="left:336.6px;top:888.59px;font-size:11.5px;font-weight:normal;letter-spacing:-0.422px;color:#7fbfff;font-weight:bold;">::: </span>
<span class="t" style="left:349.6px;top:888.59px;font-size:11.5px;font-weight:normal;letter-spacing:-0.733px;color:#7fbfff;">Chanmode</span>
<span class="t" style="left:400.0px;top:888.59px;font-size:11.5px;font-weight:normal;letter-spacing:0.000px;color:#7fbfff;text-decoration:underline;">s</span>
<span class="t" style="left:406.0px;top:888.59px;font-size:11.5px;font-weight:normal;letter-spacing:0.000px;color:#ffffff;font-weight:bold;">:</span>
<span class="t" style="left:280.0px;top:901.59px;font-size:11.5px;font-weight:normal;letter-spacing:0.000px;color:#7fbfff;font-weight:bold;">[</span>
<span class="t" style="left:284.0px;top:901.59px;font-size:11.5px;font-weight:normal;letter-spacing:-0.298px;color:#ffffff;">06</span>
<span class="t" style="left:296.2px;top:901.59px;font-size:11.5px;font-weight:normal;letter-spacing:0.000px;color:#7fbfff;font-weight:bold;">:</span>
<span class="t" style="left:300.0px;top:901.59px;font-size:11.5px;font-weight:normal;letter-spacing:-0.298px;color:#ffffff;">38</span>
<span class="t" style="left:312.2px;top:901.59px;font-size:11.5px;font-weight:normal;letter-spacing:0.000px;color:#7fbfff;font-weight:bold;">:</span>
<span class="t" style="left:316.0px;top:901.59px;font-size:11.5px;font-weight:normal;letter-spacing:0.223px;color:#ffffff;">11</span>
<span class="t" style="left:328.4px;top:901.59px;font-size:11.5px;font-weight:normal;letter-spacing:0.000px;color:#7fbfff;font-weight:bold;">]</span>
<span class="t" style="left:336.6px;top:901.59px;font-size:11.5px;font-weight:normal;letter-spacing:-0.422px;color:#7fbfff;font-weight:bold;">::: </span>
<span class="t" style="left:349.6px;top:901.59px;font-size:11.5px;font-weight:normal;letter-spacing:-0.825px;color:#7fbfff;">Mod</span>
<span class="t" style="left:369.5px;top:901.59px;font-size:11.5px;font-weight:normal;letter-spacing:0.000px;color:#7fbfff;text-decoration:underline;">e</span>
<span class="t" style="left:376.0px;top:901.59px;font-size:11.5px;font-weight:normal;letter-spacing:0.000px;color:#ffffff;font-weight:bold;">:</span>
<span class="t" style="left:382.0px;top:901.59px;font-size:11.5px;font-weight:normal;letter-spacing:0.000px;color:#7fbfff;">(</span>
<span class="t" style="left:385.6px;top:901.59px;font-size:11.5px;font-weight:normal;letter-spacing:-0.493px;color:#ffffff;">Spieleplanet</span>
<span class="t" style="left:443.0px;top:901.59px;font-size:11.5px;font-weight:normal;letter-spacing:0.000px;color:#7fbfff;">)</span>
<span class="t" style="left:450.6px;top:901.59px;font-size:11.5px;font-weight:normal;letter-spacing:-0.179px;color:#7fbfff;">sets </span>
<span class="t" style="left:474.0px;top:901.59px;font-size:11.5px;font-weight:normal;letter-spacing:0.000px;color:#7fbfff;">(</span>
<span class="t" style="left:478.0px;top:901.59px;font-size:11.5px;font-weight:normal;letter-spacing:0.000px;color:#ffffff;">v</span>
<span class="t" style="left:483.5px;top:901.59px;font-size:11.5px;font-weight:normal;letter-spacing:0.000px;color:#7fbfff;">)</span>
<span class="t" style="left:491.0px;top:901.59px;font-size:11.5px;font-weight:normal;letter-spacing:0.000px;color:#7fbfff;">(</span>
<span class="t" style="left:495.0px;top:901.59px;font-size:11.5px;font-weight:normal;letter-spacing:-0.656px;color:#ffffff;">Chiller</span>
<span class="t" style="left:523.0px;top:901.59px;font-size:11.5px;font-weight:normal;letter-spacing:0.000px;color:#7fbfff;">)</span>
<span class="t" style="left:280.0px;top:914.59px;font-size:11.5px;font-weight:normal;letter-spacing:0.000px;color:#7fbfff;font-weight:bold;">[</span>
<span class="t" style="left:284.0px;top:914.59px;font-size:11.5px;font-weight:normal;letter-spacing:-0.298px;color:#ffffff;">06</span>
<span class="t" style="left:296.2px;top:914.59px;font-size:11.5px;font-weight:normal;letter-spacing:0.000px;color:#7fbfff;font-weight:bold;">:</span>
<span class="t" style="left:300.0px;top:914.59px;font-size:11.5px;font-weight:normal;letter-spacing:-0.298px;color:#ffffff;">38</span>
<span class="t" style="left:312.2px;top:914.59px;font-size:11.5px;font-weight:normal;letter-spacing:0.000px;color:#7fbfff;font-weight:bold;">:</span>
<span class="t" style="left:316.0px;top:914.59px;font-size:11.5px;font-weight:normal;letter-spacing:-0.198px;color:#ffffff;">26</span>
<span class="t" style="left:328.4px;top:914.59px;font-size:11.5px;font-weight:normal;letter-spacing:0.000px;color:#7fbfff;font-weight:bold;">]</span>
<span class="t" style="left:336.6px;top:914.59px;font-size:11.5px;font-weight:normal;letter-spacing:-0.422px;color:#7fbfff;font-weight:bold;">::: </span>
<span class="t" style="left:349.6px;top:914.59px;font-size:11.5px;font-weight:normal;letter-spacing:-0.363px;color:#7fbfff;">Public IPv6 Address detecte</span>
<span class="t" style="left:483.0px;top:914.59px;font-size:11.5px;font-weight:normal;letter-spacing:0.000px;color:#7fbfff;text-decoration:underline;">d</span>
<span class="t" style="left:490.0px;top:914.59px;font-size:11.5px;font-weight:normal;letter-spacing:0.000px;color:#ffffff;font-weight:bold;">:</span>
<span class="t" style="left:496.0px;top:914.59px;font-size:11.5px;font-weight:normal;letter-spacing:-0.653px;color:#ffffff;">yes</span>
<span class="t" style="left:278.6px;top:927.59px;font-size:11.5px;font-weight:normal;letter-spacing:-0.506px;color:#ffffff;">LAN-Verbindung </span>
<span class="t" style="left:358.6px;top:927.59px;font-size:11.5px;font-weight:normal;letter-spacing:-0.268px;color:#ffffff;">FE80:0:0:0:91AC:27E5:6C4:1132</span>
<span class="t" style="left:278.6px;top:940.59px;font-size:11.5px;font-weight:normal;letter-spacing:-0.647px;color:#ffffff;">Hamachi </span>
<span class="t" style="left:322.0px;top:940.59px;font-size:11.5px;font-weight:normal;letter-spacing:-0.103px;color:#ffffff;">2620:9B:0:0:0:0:560:4444</span>
<span class="t" style="left:280.0px;top:953.59px;font-size:11.5px;font-weight:normal;letter-spacing:0.000px;color:#7fbfff;font-weight:bold;">[</span>
<span class="t" style="left:284.0px;top:953.59px;font-size:11.5px;font-weight:normal;letter-spacing:-0.298px;color:#ffffff;">06</span>
<span class="t" style="left:296.2px;top:953.59px;font-size:11.5px;font-weight:normal;letter-spacing:0.000px;color:#7fbfff;font-weight:bold;">:</span>
<span class="t" style="left:300.0px;top:953.59px;font-size:11.5px;font-weight:normal;letter-spacing:-0.298px;color:#ffffff;">38</span>
<span class="t" style="left:312.2px;top:953.59px;font-size:11.5px;font-weight:normal;letter-spacing:0.000px;color:#7fbfff;font-weight:bold;">:</span>
<span class="t" style="left:316.0px;top:953.59px;font-size:11.5px;font-weight:normal;letter-spacing:-0.198px;color:#ffffff;">26</span>
<span class="t" style="left:328.4px;top:953.59px;font-size:11.5px;font-weight:normal;letter-spacing:0.000px;color:#7fbfff;font-weight:bold;">]</span>
<span class="t" style="left:336.6px;top:953.59px;font-size:11.5px;font-weight:normal;letter-spacing:-0.422px;color:#7fbfff;font-weight:bold;">::: </span>
<span class="t" style="left:349.6px;top:953.59px;font-size:11.5px;font-weight:normal;letter-spacing:-0.855px;color:#7fbfff;">SSL DLL loade</span>
<span class="t" style="left:415.0px;top:953.59px;font-size:11.5px;font-weight:normal;letter-spacing:0.000px;color:#7fbfff;text-decoration:underline;">d</span>
<span class="t" style="left:422.0px;top:953.59px;font-size:11.5px;font-weight:normal;letter-spacing:0.000px;color:#ffffff;font-weight:bold;">:</span>
<span class="t" style="left:428.0px;top:953.59px;font-size:11.5px;font-weight:normal;letter-spacing:-0.653px;color:#ffffff;">yes</span>

<!-- ===== taskbar ===== -->
<div id="task" class="a">
  <div id="tbbase" class="a"></div>
  <div id="tbstreak" class="a"></div>
  <div id="tbsheen" class="a"></div>
  <div id="tbtop1" class="a"></div><div id="tbtop2" class="a"></div>
  <div id="ntbtn" class="a"></div>
  <div id="showdesk" class="a"></div>
</div>
<!-- start orb -->
<svg class="a" style="left:7px;top:984px" width="40" height="40" viewBox="7 984 40 40">
  <defs>
    <radialGradient id="orbA" cx="50%" cy="95%" r="75%"><stop offset="0" stop-color="#12e0ff"/><stop offset=".35" stop-color="#0a7fc8"/><stop offset=".75" stop-color="#0a4a88"/><stop offset="1" stop-color="#0b3f74"/></radialGradient>
    <linearGradient id="orbB" x1="0" y1="0" x2="0" y2="1"><stop offset="0" stop-color="#c4d4e4"/><stop offset="1" stop-color="#4f83b2"/></linearGradient>
    <linearGradient id="fR" x1="0" y1="0" x2="1" y2="1"><stop offset="0" stop-color="#e03a10"/><stop offset="1" stop-color="#f8b020"/></linearGradient>
    <linearGradient id="fG" x1="0" y1="1" x2="1" y2="0"><stop offset="0" stop-color="#c8e080"/><stop offset="1" stop-color="#4c9c30"/></linearGradient>
    <linearGradient id="fB" x1="0" y1="1" x2="1" y2="0"><stop offset="0" stop-color="#0c74c4"/><stop offset="1" stop-color="#8cc8f8"/></linearGradient>
    <linearGradient id="fY" x1="0" y1="0" x2="1" y2="1"><stop offset="0" stop-color="#ffe060"/><stop offset="1" stop-color="#f89010"/></linearGradient>
  </defs>
  <circle cx="27" cy="1004.2" r="18.2" fill="#b9a9ad"/>
  <circle cx="27" cy="1004.2" r="17.3" fill="url(#orbA)"/>
  <path d="M10.200 1003.500a16.800 16.800 0 0 1 33.600 0q-8 3.500-16.800 3.200t-16.800-3.200z" fill="url(#orbB)" opacity=".92"/>
  <path d="M19.600 993.600q4.800-1.500 9.400.6l-2 7.900q-4.400-2-9.400-.3z" fill="url(#fR)"/>
  <path d="M30.200 995.800q4.300 2 9 .4l-2.100 8.200q-4.700 1.600-9-.4z" fill="url(#fG)"/>
  <path d="M17.200 1003.200q4.800-1.600 9.200.4l-2 7.900q-4.400-2-9.300-.3z" fill="url(#fB)"/>
  <path d="M27.800 1005.300q4.400 2.100 9 .5l-2.200 8.100q-4.600 1.600-8.900-.5z" fill="url(#fY)"/>
</svg>
<!-- explorer folder -->
<svg class="a" style="left:72px;top:988px" width="36" height="34" viewBox="72 988 36 34">
  <defs><linearGradient id="fo" x1="0" y1="0" x2="0" y2="1"><stop offset="0" stop-color="#fbefb6"/><stop offset="1" stop-color="#ecd27c"/></linearGradient>
  <linearGradient id="fb" x1="0" y1="0" x2="0" y2="1"><stop offset="0" stop-color="#bfe6fb"/><stop offset="1" stop-color="#4fa6dc"/></linearGradient></defs>
  <path d="M74.500 991.500h14.500l1.500 2h13v24h-29z" fill="#f3dc8e" stroke="#cfae52" stroke-width=".8"/>
  <rect x="77" y="992" width="9" height="2" fill="#fff"/><rect x="77" y="992" width="3" height="2" fill="#10b020"/>
  <rect x="85" y="994" width="9" height="2" fill="#fff"/><rect x="85" y="994" width="3" height="2" fill="#e02810"/>
  <rect x="93" y="996" width="9" height="2" fill="#fff"/><rect x="93" y="996" width="3" height="2" fill="#1890f0"/>
  <path d="M73.500 996.500h16l2 2.500h13v18.500h-31z" fill="url(#fo)" stroke="#d6b860" stroke-width=".8"/>
  <path d="M77.500 1008q0-1 1-1h21q1 0 1 1v11q0 1-1 1h-3.500q-1 0-1-1v-6.500h-12v6.500q0 1-1 1h-3.500q-1 0-1-1z" fill="url(#fb)" stroke="#3d90cc" stroke-width=".9" opacity=".95"/>
  <circle cx="81" cy="1008.500" r="2.200" fill="#fff" opacity=".9"/>
</svg>
<!-- safari -->
<svg class="a" style="left:136px;top:990px" width="30" height="30" viewBox="136 990 30 30">
  <defs><linearGradient id="sr" x1="0" y1="0" x2="0" y2="1"><stop offset="0" stop-color="#f4f4f4"/><stop offset=".5" stop-color="#a8a8a8"/><stop offset="1" stop-color="#6e6e6e"/></linearGradient>
  <radialGradient id="sf" cx="50%" cy="40%" r="60%"><stop offset="0" stop-color="#8cc8f4"/><stop offset="1" stop-color="#2a72c8"/></radialGradient></defs>
  <circle cx="150.800" cy="1004.600" r="13.400" fill="url(#sr)"/>
  <circle cx="150.800" cy="1004.600" r="10.800" fill="url(#sf)"/>
  <path d="M150.800 995.500v18.200M141.700 1004.600h18.200M144.400 998.200l12.800 12.800M157.200 998.200l-12.800 12.800" stroke="#e8f4ff" stroke-width=".8" opacity=".55"/>
  <path d="M157.300 997.200l-5.300 8.600-2.400-2.400z" fill="#f04818"/>
  <path d="M144.300 1012l5.300-8.600 2.400 2.400z" fill="#f4f4f4"/>
</svg>
<!-- itunes -->
<svg class="a" style="left:196px;top:988px" width="34" height="34" viewBox="196 988 34 34">
  <defs><radialGradient id="it" cx="50%" cy="85%" r="85%"><stop offset="0" stop-color="#3ab8ff"/><stop offset=".45" stop-color="#0a6be0"/><stop offset="1" stop-color="#1a50b8"/></radialGradient>
  <linearGradient id="it2" x1="0" y1="0" x2="0" y2="1"><stop offset="0" stop-color="#9cc4f4"/><stop offset="1" stop-color="#2a78e0"/></linearGradient></defs>
  <circle cx="213" cy="1004.300" r="15.300" fill="#e8ecf2"/>
  <circle cx="213" cy="1004.300" r="13.800" fill="url(#it)"/>
  <path d="M199.600 1003a13.400 13.400 0 0 1 26.800 0q-6 2.200-13.400 2.200t-13.400-2.200z" fill="url(#it2)" opacity=".75"/>
  <path d="M209.300 997.500l10.700-2v13.200a3.300 2.600 0 1 1-2-2.400v-7l-6.700 1.300v9.500a3.300 2.600 0 1 1-2-2.400z" fill="#1c2238"/>
</svg>
<!-- NT4.0 logo on taskbar button -->
<div class="t" style="left:259.500px;top:988.500px;font:bold 21.500px 'Liberation Sans',sans-serif;color:#1c88f4;text-shadow:0 0 1px #0a4cae,0 1px 1px #0a4cae,1px 0 0 rgba(10,76,174,.6)">4.0</div>
<div class="t" style="left:259.500px;top:1002.500px;font:bold 21.500px 'Liberation Sans',sans-serif;color:#2488ea;transform:scaleY(-.62);transform-origin:50% 50%;opacity:.8;-webkit-mask-image:linear-gradient(transparent 8%,#000 85%);mask-image:linear-gradient(transparent 8%,#000 85%)">4.0</div>
<div class="t" style="left:260px;top:985.500px;font:italic bold 11.500px 'Liberation Sans',sans-serif;color:#f01010;letter-spacing:-.2px;text-shadow:0 0 1px #ffd800,1px 0 0 #ffd800,-1px 0 0 #ffd800,0 1px 0 #ffd800,0 -1px 0 #ffd800">NT</div>
<!-- tray -->
<svg class="a" style="left:1094px;top:994px" width="92" height="22" viewBox="1094 994 92 22">
  <path d="M1098 1007.500l3.600-4 3.600 4z" fill="#f4f4f4"/>
  <rect x="1119" y="998" width="1.600" height="14" fill="#fff"/>
  <path d="M1121 999.300q3.500-1.400 6 .2t6 .4q-.8 4.200-3.600 5.600-1.600-1-2.600-.8-2.800-1.400-5.800 0z" fill="#f0f0f0"/>
  <path d="M1144 998v3.500h4v-3.500M1146 996.800v4.500M1146 1001.500v4.500h3" stroke="#fff" stroke-width="1.200" fill="none"/>
  <rect x="1147.500" y="1000.500" width="9.500" height="8" fill="#10141c" stroke="#fff" stroke-width="1.200"/>
  <path d="M1152.200 1008.500v2.400M1148.500 1011.300h7.500" stroke="#fff" stroke-width="1.200"/>
  <path d="M1168.500 1002h2.500l4.500-4v14l-4.500-4h-2.500z" fill="#f4f4f4"/>
  <path d="M1178.300 1002.200q1.800 2.800 0 5.600" stroke="#d8d8d8" stroke-width="1.100" fill="none"/>
</svg>

<span class="t" style="left:1067.0px;top:995.14px;font-size:12px;font-weight:normal;letter-spacing:-1.200px;color:#ffffff;">DE</span>
<span class="t" style="left:1213.5px;top:990.14px;font-size:12px;font-weight:normal;letter-spacing:-0.758px;color:#ffffff;">06:39</span>
<span class="t" style="left:1200.0px;top:1007.14px;font-size:12px;font-weight:normal;letter-spacing:-0.729px;color:#ffffff;">20.03.2012</span>
</body></html>
